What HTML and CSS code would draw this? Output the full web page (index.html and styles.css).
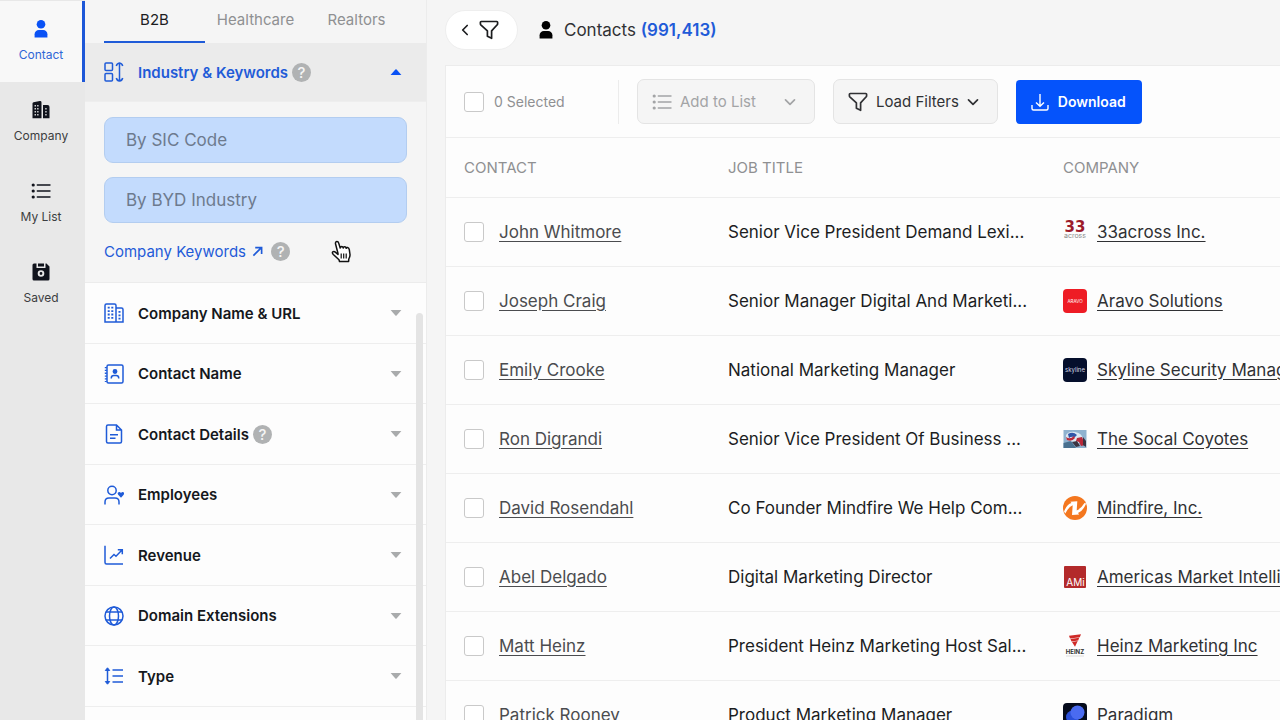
FILE: index.html
```html
<!DOCTYPE html>
<html lang="en">
<head>
  <meta charset="UTF-8" />
  <meta name="viewport" content="width=device-width, initial-scale=1" />
  <title>Contacts</title>
  <link rel="stylesheet" href="styles.css">
</head>
<body>
  <svg class="sprite" aria-hidden="true">
    <symbol id="person" viewBox="0 0 20 20"><circle cx="10" cy="5.2" r="4.3"/><path d="M3.6 18.4v-3.2c0-2.7 1.9-4.3 4.3-4.3h4.2c2.4 0 4.3 1.6 4.3 4.3v3.2z"/></symbol>
    <symbol id="list" viewBox="0 0 20 20"><circle cx="2.2" cy="4" r="1.6"/><circle cx="2.2" cy="10" r="1.6"/><circle cx="2.2" cy="16" r="1.6"/><path d="M6.3 4H19M6.3 10H19M6.3 16H19" fill="none" stroke="currentColor" stroke-width="1.4" stroke-linecap="round"/></symbol>
    <symbol id="funnel" viewBox="0 0 20 20"><path d="M2.2 1.5h15.6c.5 0 .8.4.8.8v1.5c0 .4-.1.7-.4 1l-5.600 6.100v7.400l-4.200-2.100v-5.300L1.800 4.800c-.3-.3-.4-.6-.4-1V2.300c0-.4.3-.8.8-.8z" fill="none" stroke="currentColor" stroke-width="1.700" stroke-linejoin="round"/></symbol>
    <symbol id="chevron" viewBox="0 0 12 12"><path d="M1.500 3.800 6 8.300l4.500-4.500" fill="none" stroke="currentColor" stroke-width="1.700" stroke-linecap="round" stroke-linejoin="round"/></symbol>
    <symbol id="caret" viewBox="0 0 12 6"><path d="M.6 0h10.800L6.600 5.600q-.6.500-1.200 0z"/></symbol>
  </svg>

  <div class="app">
    <nav class="rail">
      <a class="rail-item active" href="#contact">
        <svg class="icon"><use href="#person"/></svg>
        Contact
      </a>
      <a class="rail-item" href="#company">
        <svg class="icon" viewBox="0 0 20 20"><path fill-rule="evenodd" d="M2.500 2.200 8.800 1.100q1.700-.2 1.700 1.300v15.800h-9V3.600q0-1.200 1-1.400zM3.600 5v1.500h1.300V5zm2.600 0v1.500h1.300V5zM3.600 8v1.500h1.300V8zm2.600 0v1.500h1.300V8zM3.600 11v1.500h1.300V11zm2.600 0v1.500h1.300V11zM3.600 14v1.500h1.300V14zm2.600 0v1.500h1.300V14z"/><path fill-rule="evenodd" d="M12 5h4.500q2 0 2 2v11.200H12zm2.300 3v1.500h1.300V8zm0 3v1.500h1.300V11zm0 3v1.500h1.300V14z"/></svg>
        Company
      </a>
      <a class="rail-item" href="#list">
        <svg class="icon"><use href="#list"/></svg>
        My List
      </a>
      <a class="rail-item" href="#saved">
        <svg class="icon" viewBox="0 0 20 20"><path fill-rule="evenodd" d="M1.500 3q0-1.500 1.500-1.500h2.500V6h9V1.500h1L18.500 4.500v12.500q0 1.500-1.500 1.500H3q-1.500 0-1.500-1.500zM10 8.200a3.300 3.300 0 1 0 0 6.600 3.300 3.300 0 0 0 0-6.600zm0 1.900a1.400 1.400 0 1 1 0 2.800 1.400 1.400 0 0 1 0-2.800zM7 1.500h6v3H7z"/></svg>
        Saved
      </a>
    </nav>

    <aside class="filters">
      <div class="tabs">
        <button class="tab active">B2B</button>
        <button class="tab">Healthcare</button>
        <button class="tab">Realtors</button>
      </div>

      <button class="filter-head open">
        <svg class="icon line" viewBox="0 0 20 20"><rect x="1" y="1" width="7.500" height="7.500" rx="1"/><rect x="1" y="11.500" width="7.500" height="7.500" rx="1"/><path d="M15.500 1.500v17M12.300 4q.5-2.500 3.200-3 2.700.5 3.200 3M12.300 16q.5 2.500 3.200 3 2.700-.5 3.200-3"/></svg>
        <span class="filter-title">Industry &amp; Keywords</span>
        <span class="help">?</span>
        <svg class="caret"><use href="#caret"/></svg>
      </button>
      <div class="filter-body">
        <input class="field" type="text" placeholder="By SIC Code" aria-label="By SIC Code">
        <input class="field" type="text" placeholder="By BYD Industry" aria-label="By BYD Industry">
        <div class="keywords">
          <a href="#keywords">Company Keywords
            <svg class="arrow" viewBox="0 0 12 12"><path d="M1.500 10.500l8.500-8.500M3.500 1.700h7v7" fill="none" stroke="currentColor" stroke-width="1.800"/></svg>
          </a>
          <span class="help">?</span>
        </div>
      </div>

      <div class="filter-list">
        <button class="filter-head">
          <svg class="icon line" viewBox="0 0 20 20"><path d="M1 19V2.500q0-1.500 1.500-1.500h8q1.500 0 1.500 1.500V19zM12 5h5.500q1.500 0 1.500 1.500V19h-7"/><path d="M4.700 3.800v12.500M8.300 3.800v12.500M15.500 8v8.500" stroke-width="2" stroke-dasharray="1.800 1.600"/></svg>
          <span class="filter-title">Company Name &amp; URL</span>
          <svg class="caret"><use href="#caret"/></svg>
        </button>
        <button class="filter-head">
          <svg class="icon line" viewBox="0 0 20 20"><rect x="3" y="1" width="16" height="18" rx="1.500"/><path d="M1.800 3v15" stroke-width="2" stroke-dasharray="1.300 1.500"/><circle cx="11" cy="7.500" r="1.700" fill="currentColor"/><path d="M7.300 14.500v-.5q0-2.500 2.500-2.500h2.400q2.500 0 2.500 2.500v.5"/></svg>
          <span class="filter-title">Contact Name</span>
          <svg class="caret"><use href="#caret"/></svg>
        </button>
        <button class="filter-head">
          <svg class="icon line" viewBox="0 0 20 20"><path d="M2.500 2.500Q2.500 1 4 1h8.500l5 5v11.500q0 1.500-1.500 1.500H4q-1.500 0-1.500-1.500zM12.500 1v5h5M6 10.800h8M6 14.200h5.500"/></svg>
          <span class="filter-title">Contact Details</span>
          <span class="help">?</span>
          <svg class="caret"><use href="#caret"/></svg>
        </button>
        <button class="filter-head">
          <svg class="icon line" viewBox="0 0 20 20"><circle cx="8" cy="5.500" r="4.200"/><path d="M1 19.500V17q0-4 4-4h6q4 0 4 4v2.500"/><path d="M17 12.800 14.200 9.700q-1.200-1.600.3-2.500 1.500-.6 2.500.8 1-1.400 2.400-.8 1.300.9.300 2.500z" fill="currentColor" stroke="none"/></svg>
          <span class="filter-title">Employees</span>
          <svg class="caret"><use href="#caret"/></svg>
        </button>
        <button class="filter-head">
          <svg class="icon line" viewBox="0 0 20 20"><path d="M1 .8V17.500Q1 19 2.500 19H19M6 13.500l4-4 2 1.800 5.500-5.800M13.800 4.700h4.500v4.500"/></svg>
          <span class="filter-title">Revenue</span>
          <svg class="caret"><use href="#caret"/></svg>
        </button>
        <button class="filter-head">
          <svg class="icon line" viewBox="0 0 20 20"><circle cx="10" cy="10" r="9"/><ellipse cx="10" cy="10" rx="4.500" ry="9"/><path d="M2 6h16M2 14h16"/></svg>
          <span class="filter-title">Domain Extensions</span>
          <svg class="caret"><use href="#caret"/></svg>
        </button>
        <button class="filter-head">
          <svg class="icon line" viewBox="0 0 20 20"><path d="M3.500 3v14M8.500 4H19M8.500 10H19M8.500 16H19"/><path d="M3.500 1.800 1.300 4.500h4.400zM3.500 18.200l-2.200-2.700h4.400z" fill="currentColor" stroke-width="1"/></svg>
          <span class="filter-title">Type</span>
          <svg class="caret"><use href="#caret"/></svg>
        </button>
        <button class="filter-head" aria-label="More filters"></button>
        <div class="scroll-thumb"></div>
      </div>

      <svg class="pointer" viewBox="0 0 20 24"><path d="M7 13.500 4.500 3.800Q4.300 1.500 6 1.500q1.300 0 1.700 1.600L9.200 8q0-1.500 1.400-1.600 1.400 0 1.700 1.600.1-1.300 1.400-1.200 1.200.1 1.500 1.500.2-1 1.400-.8 1.400.3 1.700 2.200l.7 4.800q.2 2-1.200 4.500l-.2 2.500H8.500L8 19.700 2.300 14.500q-1.500-1.700-.5-2.700 1.400-.7 2.800.6L7 14.500z" fill="#fff" stroke="#111" stroke-width="1.500" stroke-linejoin="round"/><path d="M10.200 13.500v5M12.700 13.500v5M15.200 13.500v5" stroke="#111" stroke-width="1.200"/></svg>
    </aside>

    <main class="main">
      <header class="page-head">
        <button class="back" aria-label="Hide filters">
          <svg class="chevron left"><use href="#chevron"/></svg>
          <svg class="icon"><use href="#funnel"/></svg>
        </button>
        <h1 class="title">
          <svg class="icon"><use href="#person"/></svg>
          <span>Contacts <b>(991,413)</b></span>
        </h1>
      </header>

      <section class="card">
        <div class="toolbar">
          <label class="selected"><input class="check" type="checkbox">0 Selected</label>
          <button class="btn btn-muted">
            <svg class="icon"><use href="#list"/></svg>
            Add to List
            <svg class="chevron"><use href="#chevron"/></svg>
          </button>
          <button class="btn">
            <svg class="icon"><use href="#funnel"/></svg>
            Load Filters
            <svg class="chevron"><use href="#chevron"/></svg>
          </button>
          <button class="btn btn-primary">
            <svg class="icon" viewBox="0 0 20 20"><path d="M10 2v12M6 10.500l4 3.800 4-3.800M2 13v3.500q0 1.500 1.500 1.500h13q1.500 0 1.500-1.500V13" fill="none" stroke="currentColor" stroke-width="1.400"/></svg>
            Download
          </button>
        </div>

        <table class="contacts">
          <thead>
            <tr><th class="col-contact">CONTACT</th><th class="col-job">JOB TITLE</th><th>COMPANY</th></tr>
          </thead>
          <tbody>
            <tr>
              <td><div class="cell person"><input class="check" type="checkbox" aria-label="Select John Whitmore"><a href="#c1">John Whitmore</a></div></td>
              <td>Senior Vice President Demand Lexi...</td>
              <td><div class="cell company">
                <svg class="logo" viewBox="0 0 24 24"><text class="logo-33" x="12" y="12" font-size="15" text-anchor="middle" fill="#9c1b2b">33</text><text x="12" y="18" font-size="7" text-anchor="middle" fill="#8b8b8b">across</text></svg>
                <a href="#o1">33across Inc.</a></div></td>
            </tr>
            <tr>
              <td><div class="cell person"><input class="check" type="checkbox" aria-label="Select Joseph Craig"><a href="#c2">Joseph Craig</a></div></td>
              <td>Senior Manager Digital And Marketi...</td>
              <td><div class="cell company">
                <svg class="logo" viewBox="0 0 24 24"><rect width="24" height="24" rx="4" fill="#ee1c25"/><text x="12" y="13.500" font-size="4.500" text-anchor="middle" fill="#fff">ARAVO</text></svg>
                <a href="#o2">Aravo Solutions</a></div></td>
            </tr>
            <tr>
              <td><div class="cell person"><input class="check" type="checkbox" aria-label="Select Emily Crooke"><a href="#c3">Emily Crooke</a></div></td>
              <td>National Marketing Manager</td>
              <td><div class="cell company">
                <svg class="logo" viewBox="0 0 24 24"><rect width="24" height="24" rx="4" fill="#050f2c"/><text x="12" y="13.800" font-size="6" text-anchor="middle" fill="#d5d9e4">skyline</text></svg>
                <a href="#o3">Skyline Security Management</a></div></td>
            </tr>
            <tr>
              <td><div class="cell person"><input class="check" type="checkbox" aria-label="Select Ron Digrandi"><a href="#c4">Ron Digrandi</a></div></td>
              <td>Senior Vice President Of Business ...</td>
              <td><div class="cell company">
                <svg class="logo" viewBox="0 0 24 24"><path fill="#8fb2cf" d="M.5 3h23v18H.5z"/><path fill="#49708f" d="M.5 16 8 14l5 7H.5z"/><path fill="#dbe7f2" d="M3 8q3-4 9-3 8 1 8 9l-5 2-8-2q-5-1-4-6z"/><path fill="#3156a8" d="M5 7q5-3 9 1l-2 2q-4-1-6 1z"/><path fill="#b9293a" d="M3 10q4 3 8-1l1 2q-3 4-8 2zM14 11l5-1 3 8-4 1-2-4-3-1z"/><path fill="#3b3441" d="m9 15 5-1 3 5-4 1zM20 10l3 4v6l-3-2z"/></svg>
                <a href="#o4">The Socal Coyotes</a></div></td>
            </tr>
            <tr>
              <td><div class="cell person"><input class="check" type="checkbox" aria-label="Select David Rosendahl"><a href="#c5">David Rosendahl</a></div></td>
              <td>Co Founder Mindfire We Help Com...</td>
              <td><div class="cell company">
                <svg class="logo" viewBox="0 0 24 24"><circle cx="12" cy="12" r="12" fill="#f4771f"/><path fill="#fff" d="M1 15.500Q4 8 8.500 7L7.300 5.800l7-.6-.6 9.300q4.500-2 7.800-7.500l1.700.5q-3.500 8-8.200 9.500l1.200 1.500-7.200.5.700-9.800Q5.500 11 2.300 17.500z"/></svg>
                <a href="#o5">Mindfire, Inc.</a></div></td>
            </tr>
            <tr>
              <td><div class="cell person"><input class="check" type="checkbox" aria-label="Select Abel Delgado"><a href="#c6">Abel Delgado</a></div></td>
              <td>Digital Marketing Director</td>
              <td><div class="cell company">
                <svg class="logo" viewBox="0 0 24 24"><rect x="1" y="1" width="22" height="22" rx="1" fill="#b32a2b"/><text x="12.500" y="21" font-size="10" text-anchor="middle" fill="#fff">AMi</text></svg>
                <a href="#o6">Americas Market Intelligence</a></div></td>
            </tr>
            <tr>
              <td><div class="cell person"><input class="check" type="checkbox" aria-label="Select Matt Heinz"><a href="#c7">Matt Heinz</a></div></td>
              <td>President Heinz Marketing Host Sal...</td>
              <td><div class="cell company">
                <svg class="logo" viewBox="0 0 24 24"><path fill="#cf2a27" d="m6 1.800 12-1.600-1.200 3L7 4.500zM7.500 5l8.700-1.200-1 2.700-6.700 1zM9 8l5.700-.9-2.700 5.600z"/><text x="12" y="19.700" font-size="6" font-weight="700" text-anchor="middle" fill="#333">HEINZ</text><path d="M3 22h18" stroke="#ddd"/></svg>
                <a href="#o7">Heinz Marketing Inc</a></div></td>
            </tr>
            <tr>
              <td><div class="cell person"><input class="check" type="checkbox" aria-label="Select Patrick Rooney"><a href="#c8">Patrick Rooney</a></div></td>
              <td>Product Marketing Manager</td>
              <td><div class="cell company">
                <svg class="logo" viewBox="0 0 24 24"><rect width="24" height="24" rx="4" fill="#050b1c"/><circle cx="9.500" cy="14" r="6.500" fill="#2b50d8"/><circle cx="14.500" cy="9.500" r="7" fill="#4a6bf0"/></svg>
                <a href="#o8">Paradigm</a></div></td>
            </tr>
          </tbody>
        </table>
      </section>
    </main>
  </div>
</body>
</html>
```
FILE: styles.css
```css
* {
  box-sizing: border-box;
}

body {
  margin: 0;
  background: #f5f5f5;
  color: #1c1d1f;
  font-family: Inter, "Liberation Sans", sans-serif;
  font-size: 15px;
}

button {
  font: inherit;
  color: inherit;
  background: none;
  border: none;
  padding: 0;
  cursor: pointer;
}

a {
  color: inherit;
}

.sprite {
  position: absolute;
  width: 0;
  height: 0;
}

.app {
  display: flex;
  height: 100vh;
  overflow: hidden;
}

.icon {
  flex: none;
  width: 20px;
  height: 20px;
  fill: currentColor;
}

.icon.line {
  fill: none;
  stroke: currentColor;
  stroke-width: 1.5;
  color: #1f5bd8;
}

/* left rail */
.rail {
  flex: none;
  width: 85px;
  padding-top: 1px;
  background: #e8e8e8;
}

.rail-item {
  display: flex;
  flex-direction: column;
  align-items: center;
  justify-content: center;
  gap: 8px;
  height: 81px;
  padding: 0 3px 2px 0;
  color: #3c3d40;
  font-size: 12px;
  line-height: 16px;
  text-decoration: none;
}

.rail-item .icon {
  color: #10131c;
}

.rail-item.active {
  padding-right: 0;
  background: #f8f8f8;
  color: #2f66d6;
  border-right: 3px solid #1d57d8;
}

.rail-item.active .icon {
  color: #0a52f5;
}

/* filters */
.filters {
  position: relative;
  flex: none;
  width: 342px;
  border-right: 1px solid #ececec;
}

.tabs {
  display: flex;
  height: 43px;
  padding: 0 19px;
}

.tab {
  width: 101px;
  padding-bottom: 2px;
  border-bottom: 2px solid transparent;
  color: #8f9092;
}

.tab.active {
  color: #1c1d1f;
  border-color: #1f5bd8;
}

.filter-head {
  display: flex;
  align-items: center;
  width: 100%;
  height: 61px;
  padding: 0 24px 0 19px;
  background: #fdfdfd;
  border-bottom: 1px solid #eeeeee;
  font-weight: 600;
  color: #15181c;
}

.filter-list .filter-head:nth-child(even) {
  height: 60px;
}

.filter-head.open {
  height: 59px;
  background: #ebebeb;
  color: #1f5bd8;
}

.filter-title {
  margin-left: 14px;
}

.help {
  display: flex;
  align-items: center;
  justify-content: center;
  width: 19px;
  height: 19px;
  margin-left: 4px;
  border-radius: 50%;
  background: #b0b2b3;
  color: #f5f5f5;
  font-size: 15px;
  font-weight: 500;
}

.caret {
  width: 12px;
  height: 6px;
  margin-left: auto;
  fill: #a9abac;
}

.open .caret {
  fill: #0a52f5;
  transform: rotate(180deg);
}

.filter-body {
  display: flex;
  flex-direction: column;
  gap: 14px;
  padding: 15px 19px 16px;
  border-bottom: 1px solid #ececec;
}

.field {
  width: 100%;
  height: 46px;
  padding: 0 21px;
  border: 1px solid #b3cdf0;
  border-radius: 9px;
  background: #c3dbfd;
  color: #33415c;
  font: inherit;
  font-size: 17px;
}

.field::placeholder {
  color: #6d7a8e;
  opacity: 1;
}

.keywords {
  display: flex;
  align-items: center;
  height: 29px;
}

.keywords a {
  color: #1f5bd8;
  text-decoration: none;
}

.keywords .help {
  margin-left: 8px;
}

.arrow {
  width: 11px;
  height: 11px;
  margin-left: 2px;
}

.filter-list {
  position: relative;
}

.scroll-thumb {
  position: absolute;
  top: 30px;
  right: 3px;
  width: 7px;
  height: 500px;
  border-radius: 4px;
  background: #e4e4e4;
}

.pointer {
  position: absolute;
  top: 240px;
  left: 246px;
  width: 20px;
  height: 24px;
}

/* main */
.main {
  flex: 1;
  min-width: 0;
  padding: 10px 0 0 18px;
}

.page-head {
  display: flex;
  align-items: center;
  gap: 18px;
  height: 40px;
}

.back {
  display: flex;
  align-items: center;
  justify-content: center;
  gap: 8px;
  width: 73px;
  height: 40px;
  padding-right: 6px;
  border: 1px solid #eeeeee;
  border-radius: 20px;
  background: #fff;
}

.chevron {
  flex: none;
  width: 12px;
  height: 12px;
}

.chevron.left {
  transform: rotate(90deg);
}

.title {
  display: flex;
  align-items: center;
  gap: 8px;
  margin: 0;
  font-size: 17px;
  font-weight: 400;
  color: #303134;
}

.title .icon {
  color: #000;
}

.title b {
  font-weight: 600;
  color: #1f5bd8;
}

.card {
  margin-top: 15px;
  border: 1px solid #ececec;
  border-right: none;
  background: #fdfdfd;
  overflow: hidden;
}

.toolbar {
  display: flex;
  align-items: center;
  gap: 18px;
  height: 72px;
  padding: 0 18px;
  border-bottom: 1px solid #eeeeee;
}

.check {
  appearance: none;
  flex: none;
  width: 20px;
  height: 20px;
  margin: 0;
  border: 1px solid #c9c9c9;
  border-radius: 3px;
  background: #fff;
}

.selected {
  display: flex;
  align-items: center;
  gap: 10px;
  width: 155px;
  height: 44px;
  border-right: 1px solid #ececec;
  color: #8f9092;
  font-size: 14px;
}

.btn {
  display: flex;
  align-items: center;
  gap: 8px;
  height: 45px;
  padding: 0 18px 0 14px;
  border: 1px solid #e4e4e4;
  border-radius: 7px;
  background: #f5f5f5;
  color: #303134;
}

.btn-muted {
  width: 178px;
  color: #a3a4a6;
}

.btn-muted .chevron {
  margin-left: auto;
}

.btn-primary {
  height: 44px;
  padding: 0 16px 0 14px;
  border: none;
  border-radius: 4px;
  background: #0553fb;
  color: #fff;
  font-size: 14px;
  font-weight: 600;
}

.contacts {
  width: 100%;
  table-layout: fixed;
  border-collapse: collapse;
  font-size: 17px;
}

.col-contact {
  width: 264px;
}

.col-job {
  width: 335px;
}

.contacts th,
.contacts td {
  padding: 0 0 0 18px;
  border-bottom: 1px solid #eeeeee;
  text-align: left;
  white-space: nowrap;
}

.contacts th {
  height: 59px;
  font-size: 15px;
  font-weight: 400;
  color: #8f9092;
}

.contacts td {
  height: 69px;
}

.cell {
  display: flex;
  align-items: center;
}

.cell a {
  text-underline-offset: 3px;
}

.person {
  gap: 15px;
  color: #4b4c4f;
}

.company {
  gap: 10px;
  color: #303134;
}

.logo {
  flex: none;
  width: 24px;
  height: 24px;
}

.logo-33 {
  font-family: "DejaVu Sans", sans-serif;
  font-weight: 700;
}
```
